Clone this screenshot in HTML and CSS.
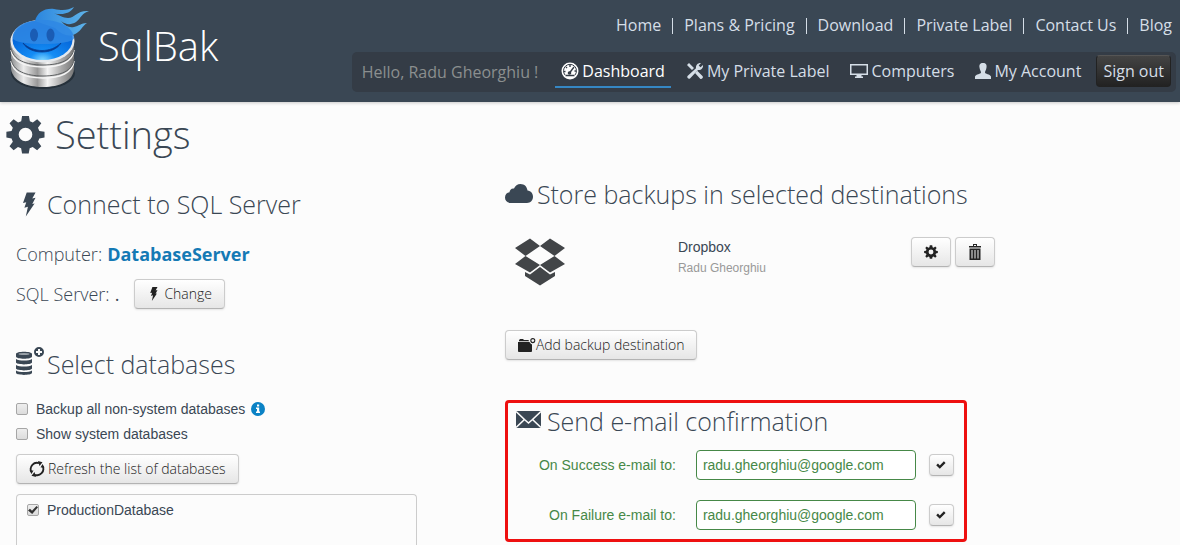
FILE: index.html
```html
<!DOCTYPE html>
<html lang="en">
<head>
<meta charset="utf-8">
<title>SqlBak - Settings</title>
<link rel="stylesheet" href="styles.css">
</head>
<body>
<svg class="defs" aria-hidden="true">
  <symbol id="gear" viewBox="0 0 40 40">
    <path fill-rule="evenodd" d="M16.500 1h7l1 5.500 3 1.200L32 4.300l4.200 4.200-3.400 4.700 1.400 3.200 5.300.9v5.800l-5.300 1-1.400 3.300 3.400 4.600-4.300 4.200-4.500-3.400-3.100 1.300-1 5.400h-6.800l-1-5.400-3.200-1.300-4.500 3.400-4.200-4.200 3.400-4.600-1.300-3.300-5.300-1v-5.800l5.300-.9 1.300-3.200-3.400-4.700 4.200-4.200 4.600 3.400 3.200-1.200zM20 13a7 7 0 1 0 0 14 7 7 0 0 0 0-14z"/>
  </symbol>
  <symbol id="bolt" viewBox="0 0 14 26"><path d="M4 0h9.500l-3.500 6.500 3.500-.8L10 12.500l2.500-.6L3 26l2.300-10.500L1.500 16.500l2-6L0 11.300z"/></symbol>
  <symbol id="check" viewBox="0 0 12 10"><path d="M0 5.300 2.200 3.200 4.500 5.500 9.600.4 11.700 2.500 4.500 9.700z"/></symbol>
</svg>

<header class="header">
  <a class="brand" href="#">
    <svg class="brand-logo" viewBox="0 0 90 90" aria-hidden="true">
      <defs>
        <linearGradient id="metal" x2="1"><stop stop-color="#8d8f91"/><stop offset=".2" stop-color="#ececec"/><stop offset=".42" stop-color="#999"/><stop offset=".58" stop-color="#f4f4f4"/><stop offset=".8" stop-color="#aaa"/><stop offset="1" stop-color="#777"/></linearGradient>
        <radialGradient id="face" cx=".5" cy="1" r=".85"><stop stop-color="#7fd6ff"/><stop offset=".25" stop-color="#148df5"/><stop offset="1" stop-color="#0059d0"/></radialGradient>
        <linearGradient id="flame" x2="1"><stop stop-color="#2b86de"/><stop offset="1" stop-color="#5fb4ea"/></linearGradient>
      </defs>
      <ellipse cx="43" cy="73" rx="32" ry="16" fill="#26313b"/>
      <path d="M11 60v9c2 12 15 18 32 18s30-6 31-18v-9z" fill="url(#metal)"/>
      <path d="M11 61c2 12 15 17 32 17s30-5 31-17" fill="none" stroke="#f5f5f5" stroke-width="1.500"/>
      <path d="M11 48v10c2 12 15 17 32 17s30-5 31-17V48z" fill="url(#metal)"/>
      <path d="M11 59c2 12 15 17 32 17s30-5 31-17" fill="none" stroke="#5d6062" stroke-width="1"/>
      <path d="M11 50c2 12 15 17 32 17s30-5 31-17" fill="none" stroke="#f5f5f5" stroke-width="1.500"/>
      <path d="M10.500 38v9c2 12 15 18 32 18s30-6 31.500-18v-9z" fill="url(#metal)"/>
      <path d="M11 48c2 12 15 17 32 17s30-5 31-17" fill="none" stroke="#5d6062" stroke-width="1"/>
      <ellipse cx="42.500" cy="41" rx="32" ry="21.500" fill="#e5e9ed"/>
      <ellipse cx="42.500" cy="40" rx="30" ry="20" fill="url(#face)"/>
      <path d="M34 20c4-9 12-12 22-10 9 2 13 1 19-3-2 5-6 7-11 7 7 4 12 2 16 0 4-3 6-3 9-3-6 2-7 6-11 10-3 3-6 4-10 3 4 3 7 2 11-1 3-2 5-2 8-2-5 4-6 9-14 12-7 2-13-1-19-6z" fill="none"/>
      <path d="M35 21c2-8 9-13 19-12 10 2 14 1 20-2-3 5-8 7-13 7-3 0-5 0-7-.500 5 1.500 9 4.500 14 4.500 7 0 9-8 21-7-7 2-8 7-13 11-5 3-10 3-15-1 4 5 8 7 13 6 5-1 7-4 13-4-5 3-6 9-14 12-6 2-12-1-18-7z" fill="url(#flame)"/>
      <path d="M12.500 38C13 26 26 20 43 20c16 0 30 7 31 18-1 4-15 6-31 6s-29-2-30.500-6z" fill="#2f87e4" fill-opacity=".88"/>
      <ellipse cx="34" cy="35" rx="4" ry="6.500" fill="#1a5cb4"/><ellipse cx="50.500" cy="35" rx="4" ry="6.500" fill="#1a5cb4"/>
      <path d="M23 43c10 10 28 10 38 0-7 12-31 12-38 0z" fill="#073c91" stroke="#073c91" stroke-width=".8"/>
    </svg>
    <span>SqlBak</span>
  </a>
  <div class="menus">
    <nav class="site-nav">
      <a href="#">Home</a><a href="#">Plans &amp; Pricing</a><a href="#">Download</a><a href="#">Private Label</a><a href="#">Contact Us</a><a href="#">Blog</a>
    </nav>
    <nav class="user-nav">
      <span class="hello">Hello, Radu Gheorghiu !</span>
      <a class="active" href="#"><svg class="i18" viewBox="0 0 18 18"><circle cx="9" cy="9" r="8.500"/><path fill="none" stroke="#343c46" stroke-width="1.400" d="M4.500 13.500h9M3 9.500h1.500M5 5l1 1M9 3v2M13 5 8.500 11M15 9h-1.500"/><circle cx="8.500" cy="11" r="1.800" fill="#343c46"/><path fill="none" stroke="#343c46" d="M4 13a6.500 6.500 0 1 1 10 0"/></svg>Dashboard</a>
      <a href="#"><svg class="i18" viewBox="0 0 18 18"><path d="M1 3 3 1l5 5-2 2zM9 11l2.200-2.200 5.500 5.400c1 1.300-1.200 3.500-2.500 2.500z"/><path d="M1.500 14 10 6.300C9.500 3 12 .7 15 1l-2.300 2.500 1.800 1.800L17 3c.5 3-2 5.500-5 5L4 16.500C2.500 17.500.5 15.500 1.500 14z"/></svg>My Private Label</a>
      <a href="#"><svg class="i18" viewBox="0 0 18 18"><path fill-rule="evenodd" d="M0 2h18v11h-6.500v1.500H13V16H5v-1.500h1.500V13H0zm1.500 1.500v8h15v-8z"/></svg>Computers</a>
      <a href="#"><svg class="i16" viewBox="0 0 16 16"><path d="M8 0c3 0 4 2 3.500 4.500C11.200 7 10 8 10 9.500c0 1.500 5 1.500 6 4V16H0v-2.500c1-2.500 6-2.500 6-4C6 8 4.800 7 4.500 4.500 4 2 5 0 8 0z"/></svg>My Account</a>
      <button class="sign-out" type="button">Sign out</button>
    </nav>
  </div>
</header>

<main>
  <h1 class="title"><svg class="title-icon"><use href="#gear"/></svg>Settings</h1>
  <div class="columns">
    <div class="left">
      <section>
        <h2><span class="slot"><svg class="bolt"><use href="#bolt"/></svg></span>Connect to SQL Server</h2>
        <p class="line">Computer: <a href="#">DatabaseServer</a></p>
        <p class="line">SQL Server: <b>.</b> <button class="btn change" type="button"><svg class="bolt-small"><use href="#bolt"/></svg>Change</button></p>
      </section>
      <section class="databases">
        <h2><svg class="db-icon" viewBox="0 0 28 28"><path d="M0 7c0-3 16-3 16 0v2.500c0 3-16 3-16 0zM0 12c3 2 13 2 16 0v3.500c-1 2.500-15 2.500-16 0zM0 18c3 2 13 2 16 0v3.500c-1 2.500-15 2.500-16 0zM0 23.500c3 2 13 2 16 0V26c-1 2.500-15 2.500-16 0z"/><ellipse cx="8" cy="7" rx="5.500" ry="1" fill="#9aa2a9"/><path fill-rule="evenodd" d="M23 0a5 5 0 1 1 0 10 5 5 0 0 1 0-10zm-1 2v2h-2v2h2v2h2V6h2V4h-2V2z"/></svg>Select databases</h2>
        <label class="check"><input type="checkbox">Backup all non-system databases<svg class="info" viewBox="0 0 14 14"><circle cx="7" cy="7" r="7" fill="#0b82c5"/><path fill="#fff" d="M6 2.500h2.200v2H6zM5 5.500h3.200v4H9V11H5V9.500h1V7H5z"/></svg></label>
        <label class="check"><input type="checkbox">Show system databases</label>
        <button class="btn" type="button"><svg class="refresh" viewBox="0 0 16 16"><path fill="none" stroke="#222" stroke-width="1.800" d="M2.200 10.500A6.200 6.200 0 0 1 10 2.200M13.800 5.500A6.200 6.200 0 0 1 6 13.800"/><path d="m9 0 4.500 1.200L10.500 5zM7 16l-4.500-1.200L5.500 11zM.5 9.500h4L2.500 13zM15.500 6.500h-4l2-3.500z"/></svg>Refresh the list of databases</button>
        <div class="db-list"><label class="check"><input type="checkbox" checked>ProductionDatabase</label></div>
      </section>
    </div>

    <div class="right">
      <section>
        <h2><svg class="cloud" viewBox="0 0 28 19"><path d="M6 19C2 19 0 16.500 0 13.500S2 8.600 4.500 8.300C4.500 6 6.500 4 9 4.500 10 2 12.500 0 15.500 0c4 0 6.500 2.800 7 6.500 3.500.4 5.500 3 5.500 6.300 0 3.500-2.500 6.200-6 6.200z"/></svg>Store backups in selected destinations</h2>
        <div class="destination">
          <svg class="dropbox" viewBox="0 0 50 47"><path d="M15 0 25 7.500 10.500 17.500 0 9.500zM35 0 25 7.500l14.500 10L50 9.500zM10.500 17.500 25 26.500 15 34 0 25.500zM39.500 17.500 25 26.500 35 34l15-8.500zM25 28.500l10 7.500 5-2.500v4L25 47l-15-9.500v-4l5 2.500z"/></svg>
          <div class="account"><span>Dropbox</span><small>Radu Gheorghiu</small></div>
          <div class="actions">
            <button class="btn square" type="button" aria-label="Settings"><svg class="i14"><use href="#gear"/></svg></button>
            <button class="btn square" type="button" aria-label="Delete"><svg class="trash" viewBox="0 0 12 16"><path fill-rule="evenodd" d="M4 0h4v2h4v1.500H0V2h4zm1 1v1h2V1zM.5 4.500h11V16H.5zM2.500 6v8.500h1V6zM5.500 6v8.500h1V6zM8.500 6v8.500h1V6z"/></svg></button>
          </div>
        </div>
        <button class="btn" type="button"><svg class="folder" viewBox="0 0 18 14"><path d="M0 4h11.500c.5 1 1.500 2 2.500 2.500V13c0 .5-.5 1-1 1H1c-.5 0-1-.5-1-1zM1 3.300V2.500C1 1.500 2 1 3 1h2l1 1h4.500l.5 1.300z"/><circle cx="14.800" cy="2.600" r="2" fill="none" stroke="#222" stroke-width="1.100"/></svg>Add backup destination</button>
      </section>
      <section class="emails">
        <h2><svg class="mail" viewBox="0 0 25 17"><path d="M0 0h25v17H0z"/><path fill="none" stroke="#fcfcfc" stroke-width="1.600" d="m0 .5 8.500 8 4 3.500 4-3.500L25 .5M0 16.500l8.500-8M25 16.500l-8.500-8"/></svg>Send e-mail confirmation</h2>
        <div class="field"><label for="ok">On Success e-mail to:</label><input id="ok" type="text" value="radu.gheorghiu@google.com"><button class="btn mini" type="button" aria-label="Save"><svg class="tick"><use href="#check"/></svg></button></div>
        <div class="field"><label for="fail">On Failure e-mail to:</label><input id="fail" type="text" value="radu.gheorghiu@google.com"><button class="btn mini" type="button" aria-label="Save"><svg class="tick"><use href="#check"/></svg></button></div>
      </section>
    </div>
  </div>
</main>
</body>
</html>
```
FILE: styles.css
```css
* { box-sizing: border-box; }
body { margin: 0; background: #fcfcfc; color: #3a4754; font: 14px/20px "Liberation Sans", Arial, sans-serif; }
h1, h2, p { margin: 0; }
a { text-decoration: none; }
svg { fill: currentColor; flex: none; }
.defs { display: none; }

.header { display: flex; justify-content: space-between; min-height: 102px; padding-right: 4px; background: #3a4754; box-shadow: 0 1px 3px #c8c8c8; font-family: "Open Sans", sans-serif; }
.brand { display: flex; align-items: flex-start; gap: 8px; color: #fff; font-size: 40px; font-weight: 300; line-height: 92px; }
.brand-logo { width: 90px; height: 90px; }
.menus { display: flex; flex-direction: column; align-items: flex-end; gap: 15px; padding-top: 13px; font-size: 16px; line-height: 24px; }
.menus a { color: #d5dee7; }
.site-nav { display: flex; padding-right: 4px; }
.site-nav a { position: relative; padding-left: 23px; }
.site-nav a + a::before { content: ""; position: absolute; left: 11px; top: 5px; width: 1px; height: 16px; background: #d5dee7; }
.user-nav { display: flex; align-items: center; gap: 9px; height: 40px; padding: 0 5px 0 10px; border-radius: 5px; background: #343c46; }
.hello { margin-right: 8px; color: #8b8f8f; }
.user-nav a { display: flex; align-items: center; gap: 3px; height: 32px; padding: 0 6px; border-bottom: 2px solid transparent; }
.user-nav a.active { color: #fff; border-color: #3587c4; }
.i18 { width: 18px; height: 18px; }
.i16 { width: 16px; height: 16px; }
.i14 { width: 14px; height: 14px; }
.sign-out { height: 32px; margin: 0 0 2px; padding: 0 6px; border: 1px solid #222; border-top-color: #555; border-radius: 4px; background: linear-gradient(#444, #222); color: #d5dee7; font: inherit; }

.title { display: flex; align-items: center; gap: 10px; padding: 8px 6px 0; font: 300 38px/48px "Open Sans", sans-serif; }
.title-icon { width: 39px; height: 39px; }
.columns { display: grid; grid-template-columns: 42% 1fr; padding: 16px 0 0 16px; }
h2 { display: flex; align-items: center; font: 300 25px/40px "Open Sans", sans-serif; }
.left { padding-top: 10px; }
.slot { display: flex; justify-content: center; width: 31px; padding-right: 5px; }
.bolt { width: 13px; height: 25px; }
.bolt-small { width: 8px; height: 14px; margin: 0 3px; }
.line { display: flex; align-items: center; height: 40px; gap: 5px; font: 300 18px/40px "Open Sans", sans-serif; }
section > .line:first-of-type { margin-top: 10px; }
.line a { color: #147ab5; font-weight: 700; }
.btn { display: inline-flex; align-items: center; justify-content: center; gap: 3px; height: 30px; padding: 0 12px; border: 1px solid #ccc; border-bottom-color: #b3b3b3; border-radius: 4px; background: linear-gradient(#fff, #e6e6e6); box-shadow: 0 1px 2px #e4e4e4; color: #222; font: 300 14px/20px "Open Sans", sans-serif; }
.change { margin-left: 10px; }
.databases { padding-top: 30px; }
.db-icon { width: 28px; height: 28px; margin: 0 3px 6px 0; }
.databases > h2 { margin-bottom: 15px; }
.check { display: flex; align-items: center; height: 20px; margin-bottom: 5px; }
.databases > .btn { margin-top: 5px; }
.check input { display: grid; place-items: center; appearance: none; width: 12px; height: 12px; margin: 0 8px 0 0; border: 1px solid #a6a6a6; border-radius: 2px; background: linear-gradient(#eee, #dcdcdc); }
.check input:checked::before { content: ""; width: 10px; height: 8px; background: #333; clip-path: polygon(0 55%, 20% 35%, 40% 60%, 85% 0, 100% 15%, 42% 100%); }
.info { width: 14px; height: 14px; margin-left: 6px; }
.refresh { width: 16px; height: 16px; }
.db-list { width: 82%; min-height: 51px; margin-top: 10px; padding: 5px 10px; border: 1px solid #ccc; border-bottom: 0; border-radius: 4px 4px 0 0; }

.cloud { width: 28px; height: 19px; margin: 0 4px 2px 0; }
.destination { display: grid; grid-template-columns: 163px 1fr auto; align-items: start; max-width: 490px; min-height: 93px; margin-top: 23px; padding-left: 10px; }
.dropbox { width: 50px; height: 50px; color: #424548; }
.account { display: flex; flex-direction: column; }
.account small { font-size: 12px; line-height: 22px; color: #999; }
.actions { display: flex; gap: 4px; }
.square { width: 40px; padding: 0; }
.trash { width: 12px; height: 16px; }
.folder { width: 18px; height: 14px; }
.right .btn { gap: 0; }
.emails { width: 462px; max-width: 100%; margin-top: 40px; padding: 0 10px 9px 8px; border: 3px solid #ee1010; border-radius: 4px; }
.mail { width: 25px; height: 17px; margin: 0 6px 2px 0; }
.emails h2 { height: 35px; }
.field { display: grid; grid-template-columns: 160px 1fr 25px; align-items: center; color: #468847; margin-top: 12px; }
.field + .field { margin-top: 20px; }
.field label { text-align: right; }
.field input { min-width: 0; height: 30px; margin: 0 13px 0 20px; padding: 0 6px; border: 1px solid #468847; border-radius: 4px; background: #fff; color: #468847; font: inherit; }
.mini { width: 25px; height: 22px; padding: 0; }
.tick { width: 10px; height: 8px; }
```
